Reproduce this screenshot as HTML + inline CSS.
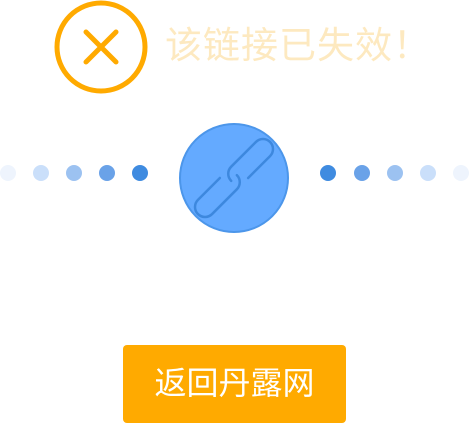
<!DOCTYPE html><html><head><style>
body{margin:0;width:469px;height:423px;background:#fff;position:relative;overflow:hidden;font-family:"Liberation Sans","Noto Sans CJK SC",sans-serif}
.d{position:absolute;width:16px;height:16px;border-radius:50%;top:165px}
</style></head><body>
<svg style="position:absolute;left:0;top:0" width="469" height="423">
<circle cx="101" cy="47" r="44" fill="none" stroke="#ffaa00" stroke-width="5"/>
<path d="M86 32L116 62M116 32L86 62" stroke="#ffaa00" stroke-width="5" stroke-linecap="round"/>
<circle cx="234" cy="178" r="54" fill="#64aaff" stroke="#4c96ea" stroke-width="2"/>
<g transform="rotate(-45 234 178)" fill="none" stroke="#3d88de" stroke-width="2.5" stroke-linecap="round">
<path d="M224 168 H193 a10 10 0 0 0 0 20 H228 a10 10 0 0 0 10 -10"/>
<path d="M244 188 H275 a10 10 0 0 0 0 -20 H240 a10 10 0 0 0 -10 10"/>
</g>
</svg>
<div style="position:absolute;left:165px;top:22px;font-size:37px;line-height:48px;color:#fde9c0;letter-spacing:1px">该链接已失效！</div>
<div class="d" style="left:0;background:#eef4fd"></div>
<div class="d" style="left:33px;background:#cadffa"></div>
<div class="d" style="left:66px;background:#9cc2f1"></div>
<div class="d" style="left:99px;background:#6aa2e8"></div>
<div class="d" style="left:132px;background:#3f8be0"></div>
<div class="d" style="left:320px;background:#3f8be0"></div>
<div class="d" style="left:354px;background:#6aa2e8"></div>
<div class="d" style="left:387px;background:#9cc2f1"></div>
<div class="d" style="left:420px;background:#cadffa"></div>
<div class="d" style="left:453px;background:#eef4fd"></div>
<div style="position:absolute;left:123px;top:345px;width:223px;height:78px;background:#ffaa00;border-radius:4px;color:#fff;font-size:32px;text-align:center;line-height:76px">返回丹露网</div>
</body></html>
